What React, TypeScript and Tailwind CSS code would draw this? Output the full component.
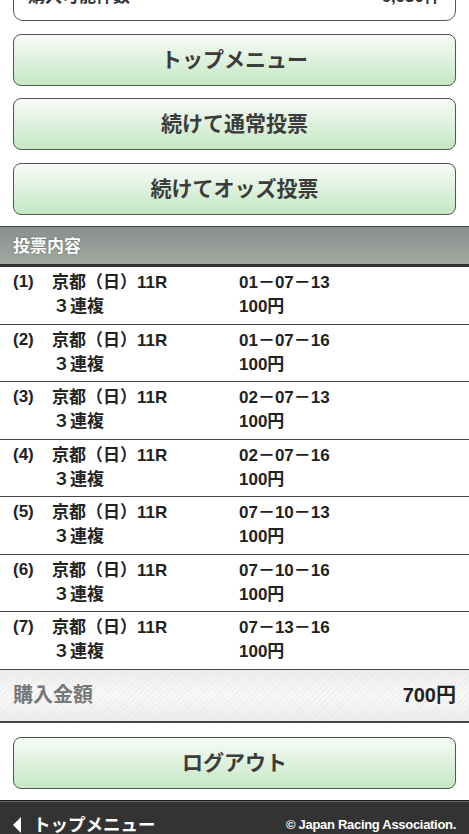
import React from "react";

const FONT = '"Liberation Sans", "Noto Sans CJK JP", sans-serif';

const rows = [
  ["(1)", "01－07－13"],
  ["(2)", "01－07－16"],
  ["(3)", "02－07－13"],
  ["(4)", "02－07－16"],
  ["(5)", "07－10－13"],
  ["(6)", "07－10－16"],
  ["(7)", "07－13－16"],
];

function GreenButton({ label }: { label: string }) {
  return (
    <div className="mx-[13px] flex h-[52px] items-center justify-center rounded-[8px] border border-[#555] bg-gradient-to-b from-[#f8fbf7] to-[#c4e7c4] text-[21px] font-bold text-[#3c3c3c]">
      {label}
    </div>
  );
}

export default function App() {
  return (
    <div className="w-[469px] overflow-hidden bg-white text-[#222]" style={{ fontFamily: FONT }}>
      {/* top card (cut off) */}
      <div className="mx-[13px] mt-[-30px] rounded-[10px] border border-[#555] bg-white px-[14px] pb-[11px] pt-[14px]">
        <div className="flex h-[24px] items-center justify-between text-[17px] font-bold leading-[24px] text-[#333]">
          <span>購入可能件数</span>
          <span>6,930件</span>
        </div>
      </div>

      <div className="mt-[13px]">
        <GreenButton label="トップメニュー" />
      </div>
      <div className="mt-[12px]">
        <GreenButton label="続けて通常投票" />
      </div>
      <div className="mt-[13px]">
        <GreenButton label="続けてオッズ投票" />
      </div>

      {/* section header */}
      <div className="mt-[11px] flex h-[41px] items-center border-b-[3px] border-t border-b-[#333] border-t-[#444] bg-gradient-to-b from-[#898f8b] to-[#a2a9a3] px-[13px] pt-[3px] text-[17px] font-bold text-white [text-shadow:0_0_2px_rgba(0,0,0,0.4)]">
        投票内容
      </div>

      {/* rows */}
      <div>
        {rows.map(([n, combo], i) => (
          <div
            key={n}
            className={`grid grid-cols-[39px_187px_1fr] px-[13px] pb-[4.5px] pt-[4px] text-[17px] font-bold leading-[24px] text-[#222] ${
              i < rows.length - 1 ? "border-b border-[#444]" : ""
            }`}
          >
            <div className="-mt-[1px]">{n}</div>
            <div>
              <div>京都（日）11R</div>
              <div className="pl-[1px]">３連複</div>
            </div>
            <div>
              <div>{combo}</div>
              <div>100円</div>
            </div>
          </div>
        ))}
      </div>

      {/* total */}
      <div className="flex h-[54px] items-center justify-between border-b-2 border-t border-b-[#444] border-t-[#444] bg-[linear-gradient(to_bottom,rgba(230,230,230,0.6),rgba(255,255,255,0.2)_50%,rgba(230,230,230,0.6)),repeating-linear-gradient(135deg,#f7f7f7_0px,#f7f7f7_3px,#ebebeb_3px,#ebebeb_4px)] px-[13px] text-[20px] font-bold">
        <span className="text-[#777]">購入金額</span>
        <span className="text-[#222]">700円</span>
      </div>

      <div className="mt-[14px]">
        <GreenButton label="ログアウト" />
      </div>

      {/* footer */}
      <div className="mt-[11px] flex h-[50px] items-start justify-between border-t border-[#1a1a1a] bg-[#333] px-[13px] pt-[12px] shadow-[inset_0_1px_0_#666] text-white">
        <div className="flex items-center gap-[12px] text-[17.5px] font-bold leading-[24px]">
          <svg width="8" height="16" viewBox="0 0 8 16">
            <polygon points="8,0 8,16 0,8" fill="#fff" />
          </svg>
          <span>トップメニュー</span>
        </div>
        <div className="text-[13px] font-bold leading-[24px] tracking-[-0.3px]">© Japan Racing Association.</div>
      </div>
    </div>
  );
}
